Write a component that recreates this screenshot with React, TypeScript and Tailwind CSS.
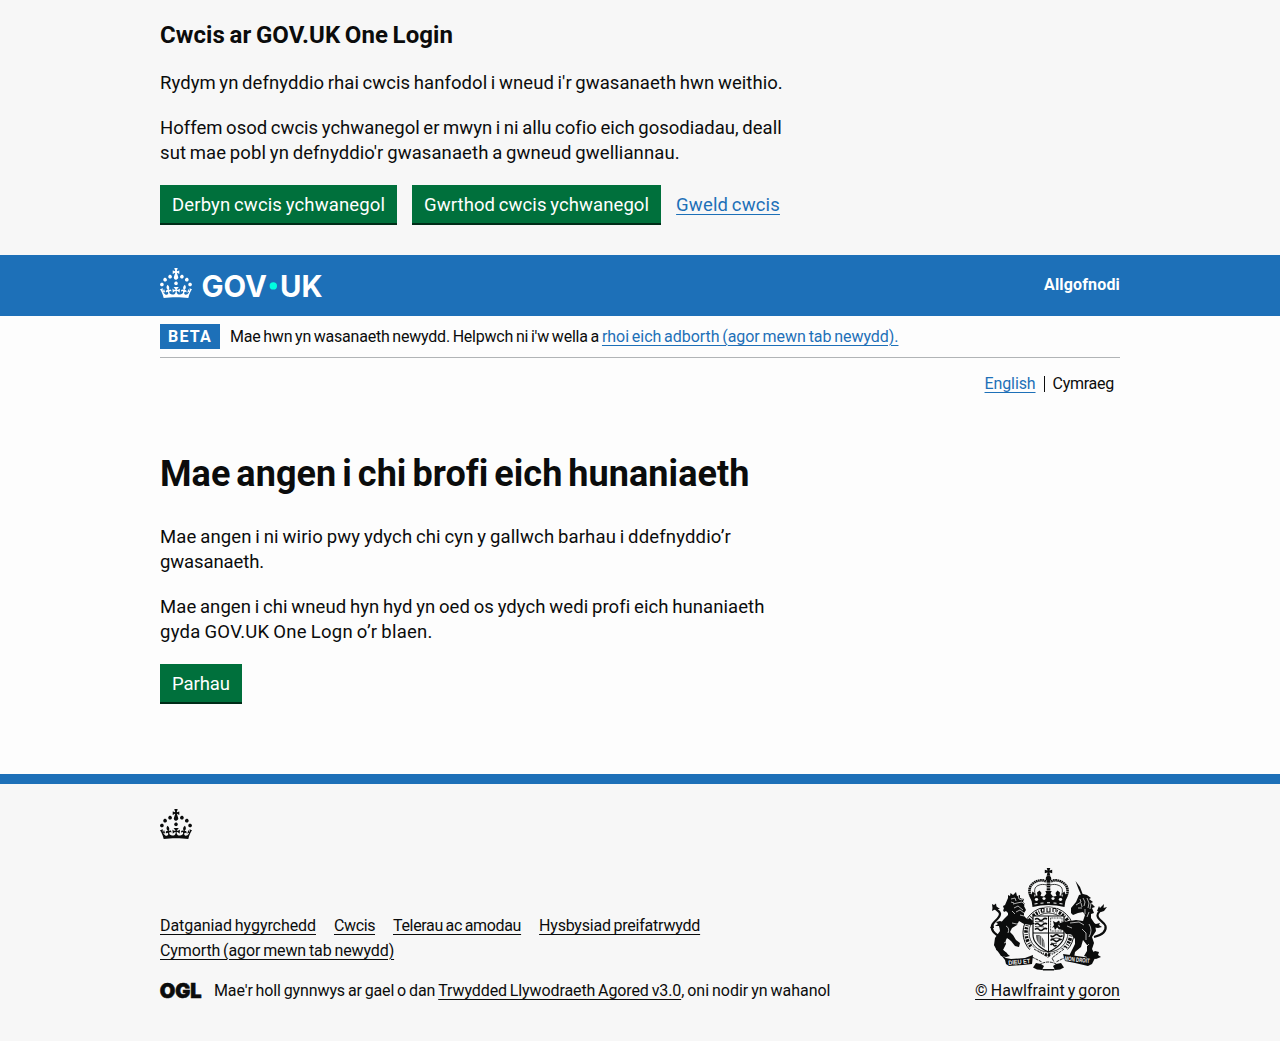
import { type ReactNode } from 'react'

const crownPath =
  'M22.6 10.4c-1 .4-2-.1-2.4-1-.4-.9.1-2 1-2.4.9-.4 2 .1 2.4 1s-.1 2-1 2.4m-5.9 6.7c-.9.4-2-.1-2.4-1-.4-.9.1-2 1-2.4.9-.4 2 .1 2.4 1s-.1 2-1 2.4m10.8-3.7c-1 .4-2-.1-2.4-1-.4-.9.1-2 1-2.4.9-.4 2 .1 2.4 1s0 2-1 2.4m3.3 4.8c-1 .4-2-.1-2.4-1-.4-.9.1-2 1-2.4.9-.4 2 .1 2.4 1s-.1 2-1 2.4M17 4.7l2.3 1.2V2.5l-2.3.7-.2-.2.9-3h-3.4l.9 3-.2.2c-.1.1-2.3-.7-2.3-.7v3.4L15 4.7c.1.1.1.2.2.2l-1.3 4c-.1.2-.1.4-.1.6 0 1.1.8 2 1.9 2.2h.7c1-.2 1.9-1.1 1.9-2.1 0-.2 0-.4-.1-.6l-1.3-4c-.1-.2 0-.2.1-.3m-7.6 5.7c.9.4 2-.1 2.4-1 .4-.9-.1-2-1-2.4-.9-.4-2 .1-2.4 1s0 2 1 2.4m-5 3c.9.4 2-.1 2.4-1 .4-.9-.1-2-1-2.4-.9-.4-2 .1-2.4 1s.1 2 1 2.4m-3.2 4.8c.9.4 2-.1 2.4-1 .4-.9-.1-2-1-2.4-.9-.4-2 .1-2.4 1s0 2 1 2.4m14.8 11c4.4 0 8.6.3 12.3.8 1.1-4.5 2.4-7 3.7-8.8l-2.5-.9c.2 1.3.3 1.9 0 2.7-.4-.4-.8-1.1-1.1-2.3l-1.2 4c.7-.5 1.3-.8 2-.9-1.1 2.5-2.6 3.1-3.5 3-1.1-.2-1.7-1.2-1.5-2.1.3-1.2 1.5-1.5 2.1-.1 1.1-2.3-.8-3-2-2.3 1.9-1.9 2.1-3.5.6-5.6-2.1 1.6-2.1 3.2-1.2 5.5-1.2-1.4-3.2-.6-2.5 1.6.9-1.4 2.1-.5 1.9.8-.2 1.1-1.7 2.1-3.5 1.9-2.7-.2-2.9-2.1-2.9-3.6.7-.1 1.9.5 2.9 1.9l.4-4.3c-1.1 1.1-2.1 1.4-3.2 1.4.4-1.2 2.1-3 2.1-3h-5.4s1.7 1.9 2.1 3c-1.1 0-2.1-.2-3.2-1.4l.4 4.3c1-1.4 2.2-2 2.9-1.9-.1 1.5-.2 3.4-2.9 3.6-1.9.2-3.4-.8-3.5-1.9-.2-1.3 1-2.2 1.9-.8.7-2.3-1.2-3-2.5-1.6.9-2.2.9-3.9-1.2-5.5-1.5 2-1.3 3.7.6 5.6-1.2-.7-3.1 0-2 2.3.6-1.4 1.8-1.1 2.1.1.2.9-.3 1.9-1.5 2.1-.9.2-2.4-.5-3.5-3 .6 0 1.2.3 2 .9l-1.2-4c-.3 1.1-.7 1.9-1.1 2.3-.3-.8-.2-1.4 0-2.7l-2.9.9C1.3 23 2.6 25.5 3.7 30c3.7-.5 7.9-.8 12.3-.8'

function Crown() {
  return (
    <svg viewBox="0 0 32 30" className="block h-[30px] w-8 fill-current">
      <path d={crownPath} />
    </svg>
  )
}

function Logo() {
  return (
    <svg viewBox="0 0 162 30" className="block h-[30px] w-[162px] overflow-visible fill-white">
      <path d={crownPath} />
      <g fontFamily="Inter" fontWeight="650" fontSize="30.5">
        <text x="41.5" y="29" textLength="65.5" lengthAdjust="spacingAndGlyphs">GOV</text>
        <text x="120" y="29" textLength="42.5" lengthAdjust="spacingAndGlyphs">UK</text>
      </g>
      <circle cx="113.3" cy="17.9" r="3.7" fill="#00ffe0" />
    </svg>
  )
}

function Crest() {
  return (
    <svg viewBox="0 0 116 103" className="block h-[103px] w-[116px] overflow-visible [word-spacing:normal]" fill="#0b0c0c" stroke="#0b0c0c" strokeWidth="0">
      {/* Crown */}
      <path d="M56.7 0h3.6l-.8 2.6 2.7-.9v3.6l-2.7-.9.8 3.400h-3.600l.8-3.400-2.700.9V1.700l2.700.9z" />
      <circle cx="58.5" cy="10.4" r="2.7" />
      <g fill="none">
        <path d="M42.5 31c-4.500-5.500-4-12.500 1-16 4-3 9-3.500 13-1.500M74.500 31c4.500-5.500 4-12.500-1-16-4-3-9-3.500-13-1.500" strokeWidth="2.600" strokeDasharray="1.600 .5" />
        <path d="M46 28c-2.500-5-1.500-9 2-10.500 3-1.500 6-1.200 9-.5M71 28c2.500-5 1.500-9-2-10.500-3-1.500-6-1.200-9-.5" strokeWidth=".8" />
        <path d="M58.500 13v13" strokeWidth="3.600" strokeDasharray="1.800 .6" />
      </g>
      <path d="M42.500 39Q58.500 35 74.500 39L75.300 33.500 78.500 25 75.500 26.500 74.500 23.500 72 25.500 73 28.500 69.500 27.500 70 24.500 67.500 22.500 65.500 25 66.500 28 63 28.500 60.500 25.500 61.700 23H55.300L56.500 25.500 54 28.500 50.500 28 51.500 25 49.500 22.500 47 24.500 47.500 27.500 44 28.500 45 25.500 42.500 23.500 41.500 26.500 38.500 25 41.700 33.500z" />
      <g fill="#f7f7f7">
        <ellipse cx="46.500" cy="31.500" rx="1.700" ry="1.400" /><ellipse cx="54" cy="30.600" rx="1.600" ry="1.300" />
        <ellipse cx="63" cy="30.600" rx="1.600" ry="1.300" /><ellipse cx="70.500" cy="31.500" rx="1.700" ry="1.400" />
        <path d="M44.500 35.500l3-.6v1l-3 .6zM50.500 34.700l3-.3v1l-3 .3zM57 34.300h3v1h-3zM63.500 34.400l3 .3v1l-3-.3zM69.500 34.900l3 .6v1l-3-.6z" />
      </g>

      {/* Garter and shield */}
      <circle cx="58.500" cy="64.500" r="25.500" fill="none" strokeWidth="1" />
      <circle cx="58.500" cy="64.500" r="22.500" fill="none" strokeWidth="3.600" strokeDasharray="2 1.200 .8 1.600 2.600 1" />
      <circle cx="58.500" cy="64.500" r="19.500" fill="none" strokeWidth=".8" />
      <path d="M43 48h31v19c0 8-7 13-15.500 17C50 80 43 75 43 67z" fill="#f7f7f7" stroke="#0b0c0c" strokeWidth="1.200" />
      <path d="M58.500 48v36M43 65h31" strokeWidth="1" />
      <g fill="none" strokeWidth="1.600">
        <path d="M45 51.500q2-2 4 0t4 0 4-.5M45 56.500q2-2 4 0t4 0 4-.5M45 61.500q2-2 4 0t4 0 4-.5" />
        <path d="M60.500 67.500q2 2 4 0t4 0 4 0M60.500 72.500q2-2 4 0t4 0 3-.5M60.500 77q2-2 3 0t3 0" />
        <path d="M45 53.500l3 .5 2-.5 4 .5M45 58.500l3 .5 2-.5 4 .5M61 70l3 .5 2-.5 4 .5M61 75l3 .5 3-.5" strokeWidth=".8" />
      </g>
      <rect x="60.600" y="50" width="11.400" height="13" fill="none" strokeWidth=".8" strokeDasharray="1 .6" />
      <path d="M63 53l3 1.500 3-2 1 2-2 2 2 5-3-2-2 2.500-1-3-2 1 2-3z" />
      <path d="M46 67h3c4 2 6 6 6 13-6-3-9-7-9-13z" opacity=".65" />
      <path d="M49 68v9M51.500 69v10M54 73v7" stroke="#f7f7f7" strokeWidth=".6" />
      <path d="M51 39.500h16v5H51z" fill="#f7f7f7" />
      <path d="M51.500 40.500h2.500v3.500h-2.500zM57 40v4h3v-4M63 44v-3.500h3V44" fill="none" strokeWidth="1.100" />

      {/* Lion */}
      <path d="M18 30l0-3 2 1 .5-3 2.500 2 3-3 1 4 3-1v3l4 1-1 3 2 2-1 2 2 4-2 3 0 3 3 3 6 1.500-.5 2 2.500 1-4 1.500-7-1-5-3-2 4-5 3-2 4 3 3 3 5 4 3-1 4-4-1-4-5-4-3-2 4-4 4 2 4 3 3 4 3-4 1-5-1-2-3-3-4-2-4 1-7 5-7-1-6 5-6 4-4 0-2-2-2-2 1-1-2 1-1-1-3 2-1z" />
      <path d="M9 83l-3-1 1-3-3-2 3-2-1-3 4 1 5-3 1 6-3 6 4 3 1 3-6-1zM16 55l-6-2-4 1 2 2-3 2 4 0 1 2 6-1z" />
      <path d="M12 69C3 66 .5 61 2.500 56.500 4 53 10.500 50 10 45.500 9.500 42 5 42 4 38.500" fill="none" strokeWidth="2.300" />
      <path d="M2 36l2 1 2-1.500.5 3L10 41l-4 0-4 2 .5-3zM0 60l3-5 1 5z" />
      <g fill="none" stroke="#f7f7f7" strokeWidth=".7">
        <path d="M21 31l4-1 1 3M23 36l4-1M28 27l1 4 3 1M27 35l5-1 3 3M24 40l4-2 5 4M26 44l4-2 4 3M31 29l2 3M21 34l3 1M22 43l3 3M30 47l4 1" />
        <path d="M16 58q4 2 2 7M22 55q5 2 9 0M14 75q4-1 5-4" />
      </g>

      {/* Unicorn */}
      <path d="M85.500 13l4.500 6 3 8-1.700.5-3-7z" />
      <path d="M81 40l5-6 3-7 4-1 4 1 4 3-2 1 4 3-2 1 4 4-3 1 2 5-3 1 0 4 4 6 1 7-4 6 2 6-2 6 2 4-3 6-5 1 1-3-3-1 3-5 0-6-4-5-2 7-6 5-1 6-4 2-1-4 3-6 3-6 0-5-4-5-5 0-3-4-5-1 2-3-3-2 6-2 7-1 6-1 7 1 2-6-2-3-5 1-5 2-2-2z" />
      <path d="M100 86l5-3 4 1-1 3 3 2-5 2-6-1zM101 54l5 2 4-1-1 2 3 2-4 1-6-1z" />
      <path d="M104 69c8-2 12.500-6 11.500-11-1-4-8-6-8-10.500 0-3.500 4-5 5-8" fill="none" strokeWidth="2.200" />
      <path d="M107 43l2-5 1 2 4-4-.5 4 3.500-1-3 4-3 1z" />
      <g fill="none" stroke="#f7f7f7" strokeWidth=".7">
        <path d="M86 37l5-3-1-3M93 30l2 4-1 4M97 30l2 5-1 5M101 35l-1 6M95 41l0 5M88 40l4 0M99 44l-2 5M91 35l1 4" />
        <path d="M80 55l9-1 5 3M92 61l4 4 0 7M99 56q4 6 0 13M96 79l3-3M77 58l5 2" />
      </g>

      {/* Motto scroll */}
      <path d="M42 78c6 5 10 7 16 12 6-5 11-7 17-11l5 5-6 6-8 4 6 7c-9 1.500-19 1.500-28 0l7-6-8-4-5-7z" fill="#f7f7f7" />
      <path d="M44 81l12 7 5-3M74 81l-12 9 2 4M42 89l10 5M76 89l-10 5M49 97q9-6 19 0" fill="none" strokeWidth=".9" strokeDasharray="3 .8" />
      <path d="M11 87l5 3 5 1 14-1 8-3-1 9-9 1-14 1-3-2-1-4zM106 88l-5 2-14-2-14-2 2 7 10 2 13 3 4-2z" />
      <g fill="#f7f7f7" fontFamily="Liberation Sans" fontWeight="700" fontSize="6.300">
        <text x="18.500" y="97" textLength="22" lengthAdjust="spacingAndGlyphs" transform="rotate(-5 18 97)">DIEU ET</text>
        <text x="74.500" y="92.500" textLength="25" lengthAdjust="spacingAndGlyphs" transform="rotate(6 75 92)">MON DROIT</text>
      </g>
      <path d="M46 95l5 1 3 2-2 4-5-.5-4-2zM71 95l-5 1-3 2 2 4 5-.5 4-2zM52 101h13l-1 1.500H53z" />
    </svg>
  )
}

/* One unbroken run of text with its own letter spacing. */
function T({ c, children }: { c: string; children: ReactNode }) {
  return <span className={'whitespace-nowrap ' + c}>{children}</span>
}

const link = 'underline decoration-1 underline-offset-[3px]'
const body = 'mb-[19px] pt-px text-[18.5px]/[25px] [word-spacing:-1px]'
const btn =
  'flex h-[38px] items-center bg-[#00703c] px-3 pt-1 text-[18.5px] text-white shadow-[0_2px_0_#002d18] [word-spacing:-1px]'

export default function App() {
  return (
    <div className="min-h-[1041px] bg-[#fdfdfd] font-[Roboto,sans-serif] text-[#0b0c0c]">
      <section className="h-[255px] bg-[#f7f7f7] pt-5">
        <div className="mx-auto w-[960px]">
          <h2 className="mb-5 text-2xl/[30px] font-bold [word-spacing:-1.5px]"><T c="tracking-[0.09px]">Cwcis ar GOV.UK One Login</T></h2>
          <p className={body}><T c="tracking-[0.056px]">Rydym yn defnyddio rhai cwcis hanfodol i wneud i'r gwasanaeth hwn weithio.</T></p>
          <p className={body}>
            <T c="tracking-[0.008px]">Hoffem osod cwcis ychwanegol er mwyn i ni allu cofio eich gosodiadau, deall</T><br />
            <T c="tracking-[0.1px]">sut mae pobl yn defnyddio'r gwasanaeth a gwneud gwelliannau.</T>
          </p>
          <div className="flex items-center gap-[15px]">
            <button className={btn}><T c="tracking-[0.137px]">Derbyn cwcis ychwanegol</T></button>
            <button className={btn}><T c="tracking-[0.09px]">Gwrthod cwcis ychwanegol</T></button>
            <a className={link + ' pt-1 text-[18.5px] text-[#1d70b8] [word-spacing:-1px]'}><T c="tracking-[0.155px]">Gweld cwcis</T></a>
          </div>
        </div>
      </section>
      <header className="h-[61px] bg-[#1d70b8] text-white">
        <div className="mx-auto flex h-full w-[960px] items-start justify-between">
          <div className="pt-[13px]"><Logo /></div>
          <a className="pt-5 text-base/5 font-bold"><T c="tracking-[0.16px]">Allgofnodi</T></a>
        </div>
      </header>
      <div className="mx-auto w-[960px]">
        <div className="flex h-[42px] items-start border-b border-[#b1b4b6] pt-2 text-base/[25px] [word-spacing:-1px]">
          <strong className="mr-2.5 h-[25px] w-[60px] bg-[#1d70b8] px-2 text-white"><T c="tracking-[1.2px]">BETA</T></strong>
          <span><T c="tracking-[-0.216px]">Mae hwn yn wasanaeth newydd. Helpwch ni i'w wella a</T> <a className={link + ' text-[#1d70b8]'}><T c="tracking-[-0.06px]">rhoi eich adborth (agor mewn tab newydd).</T></a></span>
        </div>
        <nav className="mt-4 flex justify-end pr-1.5 text-base/5">
          <a className={link + ' text-[#1d70b8]'}><T c="tracking-[-0.11px]">English</T></a>
          <span className="my-0.5 ml-2 border-l border-[#0b0c0c] pl-2 leading-4"><T c="tracking-[-0.26px]">Cymraeg</T></span>
        </nav>
        <main className="h-[380px] pt-[60px]">
          <h1 className="mb-[30px] text-[36px]/10 font-bold [word-spacing:-3px]"><T c="tracking-[0.05px]">Mae angen i chi brofi eich hunaniaeth</T></h1>
          <p className={body}>
            <T c="tracking-[0.147px]">Mae angen i ni wirio pwy ydych chi cyn y gallwch barhau i ddefnyddio’r</T><br />
            <T c="tracking-[-0.1px]">gwasanaeth.</T>
          </p>
          <p className={body}>
            <T c="tracking-[0.083px]">Mae angen i chi wneud hyn hyd yn oed os ydych wedi profi eich hunaniaeth</T><br />
            <T c="tracking-[0.27px]">gyda GOV.UK One Logn o’r blaen.</T>
          </p>
          <button className={btn}><T c="tracking-[-0.06px]">Parhau</T></button>
        </main>
      </div>
      <footer className="h-[267px] border-t-[10px] border-[#1d70b8] bg-[#f7f7f7] pt-[25px]">
        <div className="mx-auto w-[960px] text-base/[25px] [word-spacing:-1px]">
          <Crown />
          <div className="mt-[29px] flex items-end justify-between">
            <div>
              <div className="flex gap-[18px]">
                <a className={link}><T c="tracking-[-0.07px]">Datganiad hygyrchedd</T></a>
                <a className={link}><T c="tracking-[-0.39px]">Cwcis</T></a>
                <a className={link}><T c="tracking-[-0.33px]">Telerau ac amodau</T></a>
                <a className={link}><T c="tracking-[-0.216px]">Hysbysiad preifatrwydd</T></a>
              </div>
              <a className={link}><T c="tracking-[-0.107px]">Cymorth (agor mewn tab newydd)</T></a>
              <div className="mt-[15px] flex items-center">
                <svg viewBox="0 0 41 17" className="mr-[13px] h-[17px] w-[41px] overflow-visible">
                  <text x="-.3" y="16" textLength="42" lengthAdjust="spacingAndGlyphs" fontFamily="Inter" fontWeight="900" fontSize="20.5" stroke="#0b0c0c" strokeWidth=".6" className="fill-[#0b0c0c]">OGL</text>
                </svg>
                <span><T c="tracking-[-0.11px]">Mae'r holl gynnwys ar gael o dan</T> <a className={link}><T c="tracking-[-0.105px]">Trwydded Llywodraeth Agored v3.0</T></a><T c="tracking-[-0.02px]">, oni nodir yn wahanol</T></span>
              </div>
            </div>
            <div className="flex flex-col items-end gap-[7px]">
              <div className="mr-3.5"><Crest /></div>
              <a className={link}><T c="tracking-[0.06px]">© Hawlfraint y goron</T></a>
            </div>
          </div>
        </div>
      </footer>
    </div>
  )
}
